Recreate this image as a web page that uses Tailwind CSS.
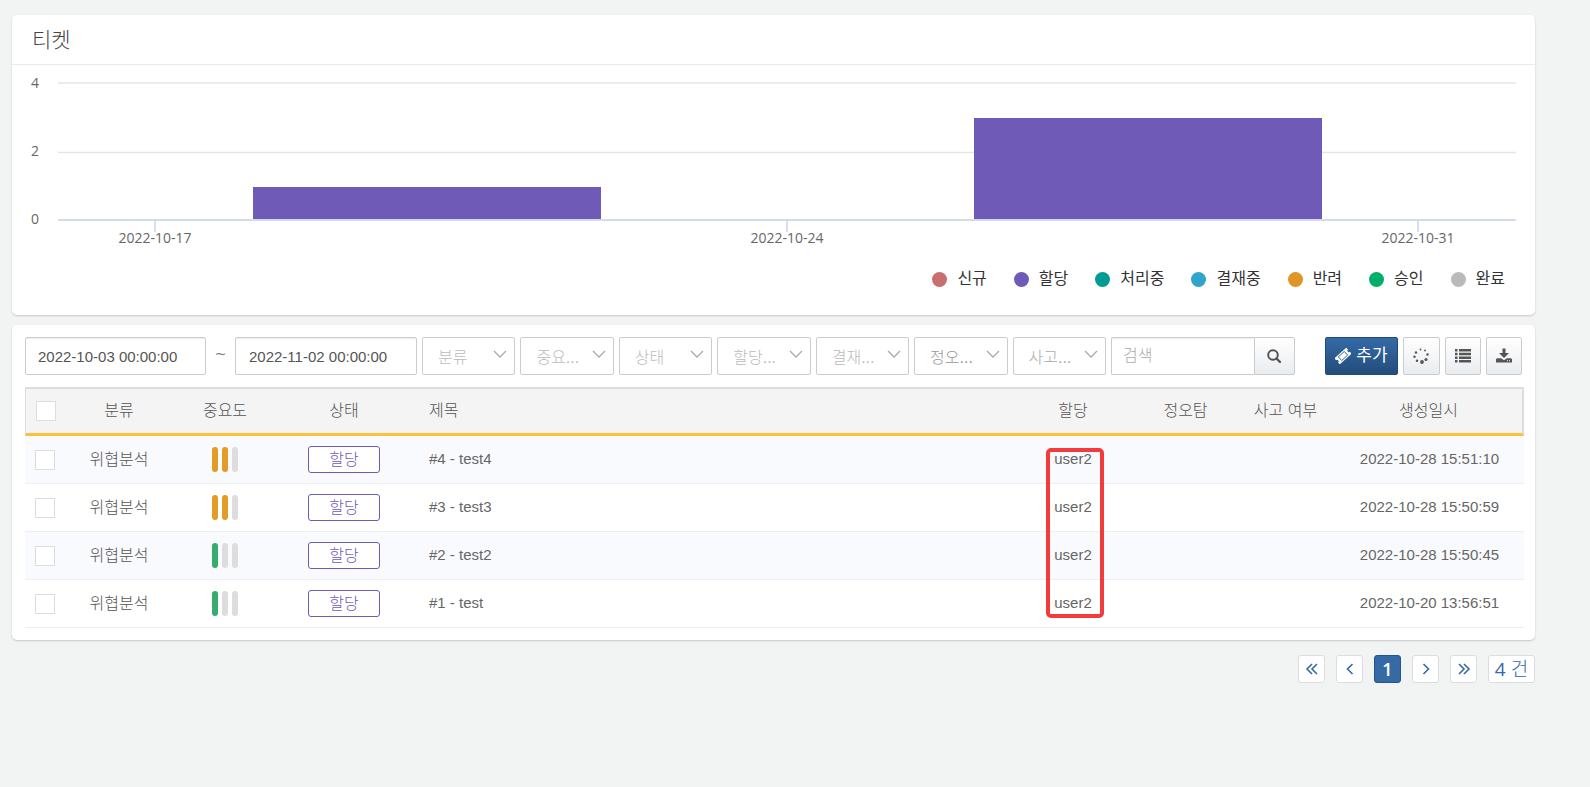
<!DOCTYPE html>
<html lang="ko">
<head>
<meta charset="utf-8">
<meta name="viewport" content="width=device-width, initial-scale=1">
<title>티켓</title>
<script src="https://cdn.jsdelivr.net/npm/@tailwindcss/browser@4"></script>
</head>
<body class="min-h-screen bg-[#f2f4f4] pt-[15px] pr-[55px] pl-3 text-[#666] font-['Liberation_Sans','Noto_Sans_CJK_KR',sans-serif]">

<section class="rounded-[5px] bg-white pb-6 shadow-[0_1px_2px_#00000030]">
  <header class="flex h-[50px] items-center border-b border-[#eaeaea] px-5">
    <h1 class="text-[21px] font-light text-[#444]">티켓</h1>
  </header>
  <svg class="block h-auto w-full font-['Open_Sans',sans-serif] text-[14px]" viewBox="0 0 1523 190" fill="#666" role="img" aria-label="티켓 차트">
    <path d="M46 18h1458M46 87.500h1458" stroke="#e6e6e6" stroke-width="1.500" />
    <rect x="241" y="122" width="348" height="33" fill="#6f5bb7" />
    <rect x="962" y="53" width="348" height="102" fill="#6f5bb7" />
    <path d="M46 155h1458" stroke="#d3daec" stroke-width="2" />
    <path d="M143 155v12M775 155v12M1406 155v12" stroke="#ccd6eb" stroke-width="1.500" />
    <text x="19" y="23">4</text>
    <text x="19" y="91">2</text>
    <text x="19" y="159">0</text>
    <g text-anchor="middle">
      <text x="143" y="178">2022-10-17</text>
      <text x="775" y="178">2022-10-24</text>
      <text x="1406" y="178">2022-10-31</text>
    </g>
  </svg>
  <ul class="mt-3 flex h-6 justify-end gap-[27px] pr-[30px] text-[16px] text-[#333]">
    <li class="flex items-center gap-[10px]"><span class="size-[15px] rounded-full bg-[#c96e6e]"></span>신규</li>
    <li class="flex items-center gap-[10px]"><span class="size-[15px] rounded-full bg-[#6f5bb7]"></span>할당</li>
    <li class="flex items-center gap-[10px]"><span class="size-[15px] rounded-full bg-[#009b93]"></span>처리중</li>
    <li class="flex items-center gap-[10px]"><span class="size-[15px] rounded-full bg-[#30a5cb]"></span>결재중</li>
    <li class="flex items-center gap-[10px]"><span class="size-[15px] rounded-full bg-[#e09626]"></span>반려</li>
    <li class="flex items-center gap-[10px]"><span class="size-[15px] rounded-full bg-[#00b069]"></span>승인</li>
    <li class="flex items-center gap-[10px]"><span class="size-[15px] rounded-full bg-[#bababa]"></span>완료</li>
  </ul>
</section>

<section class="mt-[10px] rounded-[5px] bg-white pt-3 pr-[11px] pb-3 pl-[13px] shadow-[0_1px_2px_#00000030]">
  <form class="mr-0.5 flex h-[38px] gap-[5px] text-[16px]">
    <input aria-label="시작 일시" value="2022-10-03 00:00:00" class="h-full w-[181px] rounded-[2px] border border-[#ccc] px-3 text-[15px] text-[#555] shadow-[inset_0_1px_1px_#00000013]">
    <span class="w-[19px] pt-1 text-center text-[18px] text-[#888]">~</span>
    <input aria-label="종료 일시" value="2022-11-02 00:00:00" class="h-full w-[182px] rounded-[2px] border border-[#ccc] px-[13px] text-[15px] text-[#555] shadow-[inset_0_1px_1px_#00000013]">
    <div class="relative flex-1"><select aria-label="분류" class="size-full appearance-none rounded-[2px] border border-[#ccc] pt-1 pl-[15px] font-light text-[#bbb]"><option>분류</option></select><svg class="pointer-events-none absolute top-3 right-2 size-[14px]" viewBox="0 0 14 14" fill="none" stroke="#aaa" stroke-width="1.300"><path d="M1 2l6 6 6-6"/></svg></div>
    <div class="relative flex-1"><select aria-label="중요도" class="size-full appearance-none rounded-[2px] border border-[#ccc] pt-1 pl-[15px] font-light text-[#bbb]"><option>중요...</option></select><svg class="pointer-events-none absolute top-3 right-2 size-[14px]" viewBox="0 0 14 14" fill="none" stroke="#aaa" stroke-width="1.300"><path d="M1 2l6 6 6-6"/></svg></div>
    <div class="relative flex-1"><select aria-label="상태" class="size-full appearance-none rounded-[2px] border border-[#ccc] pt-1 pl-[15px] font-light text-[#bbb]"><option>상태</option></select><svg class="pointer-events-none absolute top-3 right-2 size-[14px]" viewBox="0 0 14 14" fill="none" stroke="#aaa" stroke-width="1.300"><path d="M1 2l6 6 6-6"/></svg></div>
    <div class="relative flex-1"><select aria-label="할당" class="size-full appearance-none rounded-[2px] border border-[#ccc] pt-1 pl-[15px] font-light text-[#bbb]"><option>할당...</option></select><svg class="pointer-events-none absolute top-3 right-2 size-[14px]" viewBox="0 0 14 14" fill="none" stroke="#aaa" stroke-width="1.300"><path d="M1 2l6 6 6-6"/></svg></div>
    <div class="relative flex-1"><select aria-label="결재" class="size-full appearance-none rounded-[2px] border border-[#ccc] pt-1 pl-[15px] font-light text-[#bbb]"><option>결재...</option></select><svg class="pointer-events-none absolute top-3 right-2 size-[14px]" viewBox="0 0 14 14" fill="none" stroke="#aaa" stroke-width="1.300"><path d="M1 2l6 6 6-6"/></svg></div>
    <div class="relative flex-1"><select aria-label="정오탐" class="size-full appearance-none rounded-[2px] border border-[#ccc] pt-1 pl-[15px] font-light text-[#999]"><option>정오...</option></select><svg class="pointer-events-none absolute top-3 right-2 size-[14px]" viewBox="0 0 14 14" fill="none" stroke="#aaa" stroke-width="1.300"><path d="M1 2l6 6 6-6"/></svg></div>
    <div class="relative flex-1"><select aria-label="사고 여부" class="size-full appearance-none rounded-[2px] border border-[#ccc] pt-1 pl-[15px] font-light text-[#aaa]"><option>사고...</option></select><svg class="pointer-events-none absolute top-3 right-2 size-[14px]" viewBox="0 0 14 14" fill="none" stroke="#aaa" stroke-width="1.300"><path d="M1 2l6 6 6-6"/></svg></div>
    <div class="mr-[25px] flex w-[184px]">
      <input aria-label="검색" placeholder="검색" class="h-full w-[143px] rounded-l-[2px] border border-r-0 border-[#ccc] px-[11px] font-light placeholder:text-[#aaa] shadow-[inset_0_1px_1px_#00000013]">
      <button type="button" aria-label="검색 실행" class="flex flex-1 items-center justify-center rounded-r-[2px] border border-[#ccc] bg-linear-to-b from-white to-[#e9edf0]"><svg class="size-[14px]" viewBox="0 0 14 14" fill="none" stroke="#555"><circle cx="6" cy="6" r="4.800" stroke-width="2"/><path d="M9.500 9.500L13 13" stroke-width="2.400" stroke-linecap="round"/></svg></button>
    </div>
    <button type="button" class="flex w-[73px] items-center justify-center gap-[5px] rounded-[2px] border border-[#1f4a79] bg-linear-to-b from-[#356aa6] to-[#234d7c] text-[17px] text-white"><svg class="size-4" viewBox="0 0 16 16"><g transform="rotate(-42 8 8)"><path fill="#fff" d="M0 4h16v2.500a1.500 1.500 0 0 0 0 3V12H0V9.500a1.500 1.500 0 0 0 0-3z"/><path fill="none" stroke="#2c5b92" stroke-width="0.900" d="M4 5.500h8v5H4z"/></g></svg>추가</button>
    <button type="button" aria-label="새로고침" class="flex w-[37px] items-center justify-center rounded-[2px] border border-[#ccc] bg-linear-to-b from-white to-[#e9edf0]"><svg class="size-4" viewBox="0 0 16 16" fill="#555"><circle cx="7.500" cy="1.500" r="0.900"/><circle cx="12" cy="2.500" r="0.900"/><circle cx="14.500" cy="6.500" r="1.200"/><circle cx="13" cy="11.500" r="1.600"/><circle cx="9" cy="14" r="1.900"/><circle cx="4" cy="12.800" r="1.200"/><circle cx="1.500" cy="8.800" r="1.200"/><circle cx="3" cy="4.500" r="1.200"/></svg></button>
    <button type="button" aria-label="목록" class="flex w-9 items-center justify-center rounded-[2px] border border-[#ccc] bg-linear-to-b from-white to-[#e9edf0]"><svg class="size-4" viewBox="0 0 16 16" fill="#555"><path d="M0 1h2.500v2.500H0zM4 1h12v2.500H4zM0 4.700h2.500v2.500H0zM4 4.700h12v2.500H4zM0 8.400h2.500v2.500H0zM4 8.400h12v2.500H4zM0 12.100h2.500v2.500H0zM4 12.100h12v2.500H4z"/></svg></button>
    <button type="button" aria-label="다운로드" class="flex w-9 items-center justify-center rounded-[2px] border border-[#ccc] bg-linear-to-b from-white to-[#e9edf0]"><svg class="size-4" viewBox="0 0 16 16" fill="#555"><path d="M6.500 0.500h3v4.500H13L8 10 3 5h3.500z"/><path d="M1 10.300h4l3 2 3-2h4l1 1V14.500H0V11.300z"/><path fill="#eef1f3" d="M11 12.300h1v1h-1zM13 12.300h1v1h-1z"/></svg></button>
  </form>

  <div class="relative mt-3">
    <table class="w-full table-fixed border-separate border-spacing-0 text-center text-[15px]">
      <colgroup><col class="w-[40px]"><col class="w-[108px]"><col class="w-[104px]"><col class="w-[134px]"><col><col class="w-[124px]"><col class="w-[101px]"><col class="w-[99px]"><col class="w-[189px]"></colgroup>
      <thead>
        <tr class="h-[49px] bg-[#f4f4f4] text-[16px] text-[#555] *:border-t-2 *:border-b-3 *:border-t-[#ddd] *:border-b-[#fbc13a] *:font-light">
          <th class="border-l border-l-[#ddd]"><input type="checkbox" aria-label="전체 선택" class="mx-auto block size-5 appearance-none border border-[#ddd] bg-white"></th>
          <th>분류</th><th>중요도</th><th>상태</th><th class="pl-[18px] text-left">제목</th><th>할당</th><th>정오탐</th><th>사고 여부</th><th class="border-r-2 border-r-[#ddd]">생성일시</th>
        </tr>
      </thead>
      <tbody>
        <tr class="h-12 bg-[#f9fafe] *:border-b *:border-[#edeff1]">
          <td><input type="checkbox" aria-label="#4 선택" class="mx-auto block size-5 appearance-none border border-[#ddd] bg-white"></td>
          <td class="text-[16px] font-light text-[#555]">위협분석</td>
          <td><div class="flex justify-center gap-1"><i class="h-[25px] w-1.5 rounded-full bg-[#e29c28]"></i><i class="h-[25px] w-1.5 rounded-full bg-[#e29c28]"></i><i class="h-[25px] w-1.5 rounded-full bg-[#ddd]"></i></div></td>
          <td><span class="mx-auto flex h-[27px] w-[72px] items-center justify-center rounded-[3px] border border-[#6f5bb7] bg-white text-[16px] font-light text-[#6f5bb7]">할당</span></td>
          <td class="pl-[18px] text-left">#4 - test4</td><td>user2</td><td></td><td></td><td>2022-10-28 15:51:10</td>
        </tr>
        <tr class="h-12 *:border-b *:border-[#edeff1]">
          <td><input type="checkbox" aria-label="#3 선택" class="mx-auto block size-5 appearance-none border border-[#ddd] bg-white"></td>
          <td class="text-[16px] font-light text-[#555]">위협분석</td>
          <td><div class="flex justify-center gap-1"><i class="h-[25px] w-1.5 rounded-full bg-[#e29c28]"></i><i class="h-[25px] w-1.5 rounded-full bg-[#e29c28]"></i><i class="h-[25px] w-1.5 rounded-full bg-[#ddd]"></i></div></td>
          <td><span class="mx-auto flex h-[27px] w-[72px] items-center justify-center rounded-[3px] border border-[#6f5bb7] bg-white text-[16px] font-light text-[#6f5bb7]">할당</span></td>
          <td class="pl-[18px] text-left">#3 - test3</td><td>user2</td><td></td><td></td><td>2022-10-28 15:50:59</td>
        </tr>
        <tr class="h-12 bg-[#f9fafe] *:border-b *:border-[#edeff1]">
          <td><input type="checkbox" aria-label="#2 선택" class="mx-auto block size-5 appearance-none border border-[#ddd] bg-white"></td>
          <td class="text-[16px] font-light text-[#555]">위협분석</td>
          <td><div class="flex justify-center gap-1"><i class="h-[25px] w-1.5 rounded-full bg-[#36ad6c]"></i><i class="h-[25px] w-1.5 rounded-full bg-[#ddd]"></i><i class="h-[25px] w-1.5 rounded-full bg-[#ddd]"></i></div></td>
          <td><span class="mx-auto flex h-[27px] w-[72px] items-center justify-center rounded-[3px] border border-[#6f5bb7] bg-white text-[16px] font-light text-[#6f5bb7]">할당</span></td>
          <td class="pl-[18px] text-left">#2 - test2</td><td>user2</td><td></td><td></td><td>2022-10-28 15:50:45</td>
        </tr>
        <tr class="h-12 *:border-b *:border-[#edeff1]">
          <td><input type="checkbox" aria-label="#1 선택" class="mx-auto block size-5 appearance-none border border-[#ddd] bg-white"></td>
          <td class="text-[16px] font-light text-[#555]">위협분석</td>
          <td><div class="flex justify-center gap-1"><i class="h-[25px] w-1.5 rounded-full bg-[#36ad6c]"></i><i class="h-[25px] w-1.5 rounded-full bg-[#ddd]"></i><i class="h-[25px] w-1.5 rounded-full bg-[#ddd]"></i></div></td>
          <td><span class="mx-auto flex h-[27px] w-[72px] items-center justify-center rounded-[3px] border border-[#6f5bb7] bg-white text-[16px] font-light text-[#6f5bb7]">할당</span></td>
          <td class="pl-[18px] text-left">#1 - test</td><td>user2</td><td></td><td></td><td>2022-10-20 13:56:51</td>
        </tr>
      </tbody>
    </table>
    <div class="pointer-events-none absolute top-[61px] right-[420px] h-[170px] w-[58px] rounded-[5px] border-4 border-[#f23c3c]"></div>
  </div>
</section>

<nav aria-label="페이지" class="mt-[15px] flex h-7 justify-end gap-[11px] text-[#356aa6]">
  <button type="button" aria-label="처음" class="flex w-[27px] items-center justify-center rounded-[3px] border border-[#ddd] bg-white"><svg class="size-4" viewBox="0 0 16 16" fill="none" stroke="currentColor" stroke-width="1.600"><path d="M8 3L3 8l5 5M13 3L8 8l5 5"/></svg></button>
  <button type="button" aria-label="이전" class="flex w-[27px] items-center justify-center rounded-[3px] border border-[#ddd] bg-white"><svg class="size-4" viewBox="0 0 16 16" fill="none" stroke="currentColor" stroke-width="1.600"><path d="M10.500 3l-5 5 5 5"/></svg></button>
  <button type="button" aria-current="page" class="flex w-[27px] items-center justify-center rounded-[3px] border border-[#285588] bg-[#356aa6] font-['Open_Sans',sans-serif] text-[18px] font-semibold text-white">1</button>
  <button type="button" aria-label="다음" class="flex w-[27px] items-center justify-center rounded-[3px] border border-[#ddd] bg-white"><svg class="size-4" viewBox="0 0 16 16" fill="none" stroke="currentColor" stroke-width="1.600"><path d="M5.500 3l5 5-5 5"/></svg></button>
  <button type="button" aria-label="마지막" class="flex w-[27px] items-center justify-center rounded-[3px] border border-[#ddd] bg-white"><svg class="size-4" viewBox="0 0 16 16" fill="none" stroke="currentColor" stroke-width="1.600"><path d="M3 3l5 5-5 5M8 3l5 5-5 5"/></svg></button>
  <span class="flex w-[47px] items-center justify-center rounded-[3px] border border-[#ddd] bg-white font-['Open_Sans','Noto_Sans_CJK_KR',sans-serif] text-[19px] whitespace-pre"><span>4 </span><span class="font-light">건</span></span>
</nav>
</body>
</html>
